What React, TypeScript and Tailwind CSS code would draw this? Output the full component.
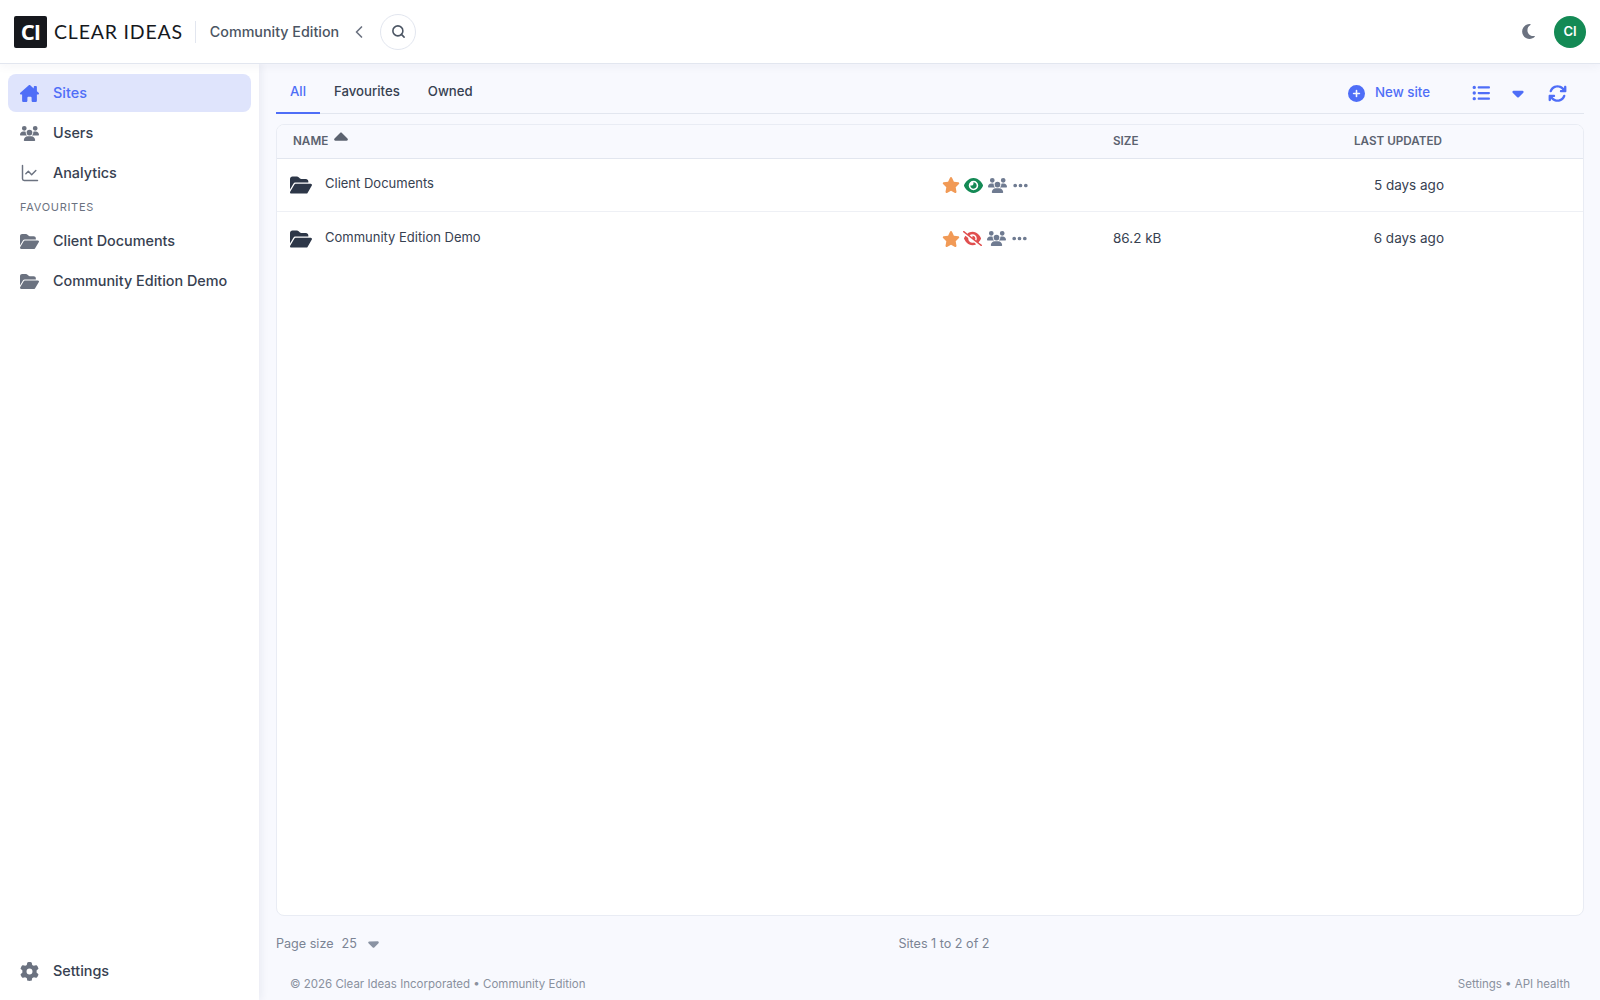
import React from 'react';
import {
  FaHouseChimney, FaUsers, FaFolderOpen, FaGear, FaStar, FaEye, FaEyeSlash,
  FaEllipsis, FaMoon, FaCirclePlus, FaListUl, FaCaretDown, FaCaretUp, FaArrowsRotate,
} from 'react-icons/fa6';
import { ChartLine, ChevronLeft, Search } from 'lucide-react';

const sites = [
  { name: 'Client Documents', size: '', updated: '5 days ago', visible: true },
  { name: 'Community Edition Demo', size: '86.2 kB', updated: '6 days ago', visible: false },
];

const NavItem = ({ icon, label, active }: { icon: React.ReactNode; label: string; active?: boolean }) => (
  <div className={`flex items-center h-[38px] rounded-lg pl-[10px] text-[14.4px] font-medium ${active ? 'bg-[#dfe4fc] text-[#4f6ef7]' : 'text-[#374151]'}`}>
    <span className={`w-[23px] flex justify-center text-[19px] ${active ? 'text-[#4f6ef7]' : 'text-[#6b7280]'}`}>{icon}</span>
    <span className="ml-[12px]">{label}</span>
  </div>
);

export default function App() {
  return (
    <div className="h-[1000px] flex flex-col bg-white text-[#374151] overflow-hidden" style={{ fontFamily: 'Inter, sans-serif' }}>
      <header className="relative z-20 h-[64px] shrink-0 flex items-center pl-[14px] pr-[14px] bg-white border-b border-[#e2e6ef] shadow-[0_2px_10px_rgba(30,40,90,0.05)]">
        <div className="w-[33px] h-[32px] rounded-[2px] bg-[#16181d] flex items-center justify-center text-white text-[22px] font-bold tracking-[-1px]" style={{ fontFamily: '"Open Sans", sans-serif' }}>CI</div>
        <span className="ml-[7px] text-[19.5px] text-[#16181d] tracking-[0.8px]" style={{ fontFamily: 'Lato, sans-serif' }}>CLEAR IDEAS</span>
        <div className="ml-[12px] w-px h-[22px] bg-[#e2e6ef]" />
        <span className="ml-[14px] text-[14.3px] font-medium text-[#4b5563]">Community Edition</span>
        <ChevronLeft className="ml-[10px] text-[#6b7280]" size={20} strokeWidth={2} />
        <div className="ml-[11px] w-[36px] h-[36px] rounded-full border border-[#e2e6ef] flex items-center justify-center">
          <Search className="text-[#4b5563]" size={15} strokeWidth={2.5} />
        </div>
        <div className="ml-auto flex items-center">
          <FaMoon className="text-[17px] text-[#6b7280]" />
          <div className="ml-[17px] w-[32px] h-[32px] rounded-full bg-[#148a55] text-white text-[13px] font-semibold flex items-center justify-center">CI</div>
        </div>
      </header>

      <div className="flex flex-1 min-h-0">
        <aside className="relative z-10 w-[259px] shrink-0 bg-white flex flex-col gap-[2px] px-[8px] pt-[10px] pb-[10px] shadow-[2px_0_8px_rgba(30,40,90,0.07)]">
          <NavItem icon={<FaHouseChimney />} label="Sites" active />
          <NavItem icon={<FaUsers />} label="Users" />
          <NavItem icon={<ChartLine size={20} strokeWidth={1.75} />} label="Analytics" />
          <div className="mt-[3px] pl-[12px] text-[11px] tracking-[0.7px] text-[#6b7280] leading-[20px]">FAVOURITES</div>
          <div className="mt-[3px]"><NavItem icon={<FaFolderOpen />} label="Client Documents" /></div>
          <NavItem icon={<FaFolderOpen />} label="Community Edition Demo" />
          <div className="mt-auto"><NavItem icon={<FaGear />} label="Settings" /></div>
        </aside>

        <main className="flex-1 min-w-0 flex flex-col bg-[#f8f9fe] pl-[17px] pr-[16px]">
          <div className="h-[50px] shrink-0 flex items-end border-b border-[#e2e6ef] text-[13.2px] font-medium">
            <div className="h-[50px] w-[44px] flex items-center justify-center text-[#4f6ef7] border-b-2 border-[#4f6ef7] -mb-px pt-[8px]">All</div>
            <div className="h-[50px] ml-[14px] flex items-center text-[#374151] pt-[8px]">Favourites</div>
            <div className="h-[50px] ml-[28px] flex items-center text-[#374151] pt-[8px]">Owned</div>
            <div className="ml-auto h-[50px] flex items-center pt-[10px] text-[#4f6ef7]">
              <FaCirclePlus className="text-[17px]" />
              <span className="ml-[10px] text-[13.3px]">New site</span>
              <FaListUl className="ml-[42px] text-[18px]" />
              <FaCaretDown className="ml-[19px] text-[18px]" />
              <FaArrowsRotate className="ml-[21px] mr-[17px] text-[19px]" />
            </div>
          </div>

          <section className="mt-[10px] h-[792px] shrink-0 rounded-lg border border-[#e9ecf4] bg-white overflow-hidden">
            <div className="h-[34px] grid grid-cols-[665px_171px_229px_100px] items-center bg-[#f8f9fe] border-b border-[#e2e6ef] text-[11.7px] font-semibold text-[#5c6370]">
              <div className="pl-[16px] flex items-center">NAME<FaCaretUp className="ml-[2px] -mt-[7px] text-[22px] text-[#5c6370]" /></div>
              <div />
              <div>SIZE</div>
              <div className="text-right whitespace-nowrap">LAST UPDATED</div>
            </div>
            {sites.map((s, i) => (
              <div key={s.name} className={`h-[53px] grid grid-cols-[665px_171px_230px_101px] items-center text-[14px] text-[#374151] ${i === 0 ? 'border-b border-[#eef0f5]' : ''}`}>
                <div className="flex items-center pl-[13px]">
                  <FaFolderOpen className="text-[22px] text-[#2d3748]" />
                  <span className="ml-[13px] -mt-[2px] text-[13px]">{s.name}</span>
                </div>
                <div className="flex items-center">
                  <FaStar className="text-[18px] text-[#f19a56]" />
                  {s.visible ? <FaEye className="ml-[4px] text-[19px] text-[#148a55]" /> : <FaEyeSlash className="ml-[3px] text-[19px] text-[#e04f4f]" />}
                  <FaUsers className="ml-[5px] text-[19px] text-[#6f7b91]" />
                  <FaEllipsis className="ml-[5px] text-[17px] text-[#6f7b91]" />
                </div>
                <div className="text-[13.5px]">{s.size}</div>
                <div className="text-right text-[13.5px]">{s.updated}</div>
              </div>
            ))}
          </section>

          <div className="h-[56px] shrink-0 grid grid-cols-[1fr_auto_1fr] items-center text-[12.6px] text-[#7b8494]">
            <div className="flex items-center">Page size<span className="ml-[8px]">25</span><FaCaretDown className="ml-[8px] text-[17px] text-[#8a93a3]" /></div>
            <div className="text-center ml-[28px]">Sites 1 to 2 of 2</div>
          </div>

          <div className="flex-1 flex items-start justify-between pt-[4px] pl-[14px] pr-[14px] text-[11.5px] text-[#8a919e]">
            <span>© 2026 Clear Ideas Incorporated • Community Edition</span>
            <span>Settings • API health</span>
          </div>
        </main>
      </div>
    </div>
  );
}
